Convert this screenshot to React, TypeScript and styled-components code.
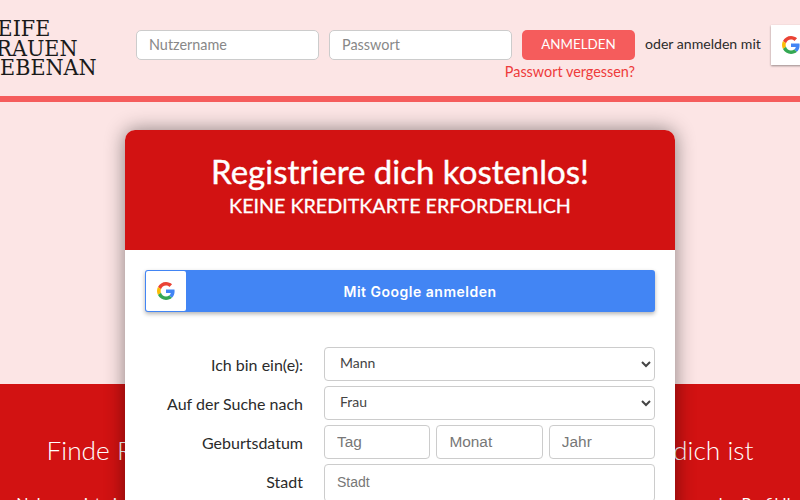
import styled, {createGlobalStyle} from 'styled-components';

const GlobalStyle = createGlobalStyle`
  html,
  body {
    margin: 0;
    padding: 0;
    background: #fce5e5;
    font-family: Lato, 'Open Sans', sans-serif;
    color: #2b2b2b;
  }
`;

const Page = styled.div`
  width: 800px;
  height: 500px;
  overflow: hidden;
`;

const Header = styled.header`
  display: flex;
  justify-content: center;
  align-items: flex-start;
  gap: 10px;
  height: 96px;
  width: 800px;
  border-bottom: 6px solid #f55c5c;
`;

const Logo = styled.div`
  flex: none;
  width: 144px;
  margin-top: 19px;
  font-family: 'DejaVu Serif Condensed', 'DejaVu Serif', serif;
  font-stretch: condensed;
  font-size: 23px;
  line-height: 19.5px;
  color: #1a1a1a;
`;

const LoginForm = styled.form`
  flex: none;
  display: flex;
  flex-direction: column;
  align-items: flex-end;
  margin-top: 30px;
`;

const LoginRow = styled.div`
  display: flex;
  gap: 10px;
`;

const LoginInput = styled.input`
  width: 183px;
  height: 30px;
  box-sizing: border-box;
  padding: 0 12px 2px;
  border: 1px solid #ccc;
  border-radius: 5px;
  background: #fff;
  font: 14.4px Lato, sans-serif;
  &::placeholder {
    color: #888;
  }
`;

const LoginButton = styled.button`
  width: 113px;
  height: 30px;
  padding: 0 0 2px;
  border: 0;
  border-radius: 5px;
  background: #f55c5c;
  color: #fff;
  font: 13.4px Lato, sans-serif;
`;

const ForgotLink = styled.a`
  margin-top: 3px;
  font-size: 14.4px;
  line-height: 18px;
  color: #ee3b3b;
`;

const OrText = styled.span`
  flex: none;
  width: 116px;
  margin-top: 35px;
  font-size: 14.1px;
  line-height: 18px;
  white-space: nowrap;
`;

const GoogleSquare = styled.div`
  flex: none;
  display: flex;
  align-items: center;
  justify-content: center;
  width: 40px;
  height: 40px;
  margin: 25px 7px 0 0;
  background: #fff;
  box-shadow: 0 1px 2px rgba(0, 0, 0, 0.4);
`;

const Hero = styled.section`
  height: 282px;
  padding-top: 28px;
  box-sizing: border-box;
`;

const Card = styled.div`
  position: relative;
  z-index: 1;
  width: 550px;
  margin: 0 auto;
  border-radius: 10px 10px 0 0;
  background: #fff;
  box-shadow: 0 0 20px rgba(0, 0, 0, 0.45);
`;

const CardHead = styled.div`
  height: 120px;
  padding-top: 21px;
  box-sizing: border-box;
  border-radius: 10px 10px 0 0;
  background: #d21212;
  color: #fff;
  text-align: center;
`;

const CardTitle = styled.h1`
  margin: 0;
  font-size: 33px;
  line-height: 40px;
  font-weight: 400;
  -webkit-text-stroke: 0.4px #fff;
`;

const CardSub = styled.p`
  margin: 2px 0 0;
  font-size: 19.7px;
  line-height: 26px;
  font-weight: 400;
  -webkit-text-stroke: 0.3px #fff;
`;

const CardBody = styled.div`
  padding: 20px;
`;

const GoogleWide = styled.button`
  display: flex;
  align-items: center;
  width: 510px;
  height: 42px;
  padding: 1px;
  border: 0;
  border-radius: 3px;
  background: #4285f4;
  box-shadow: 0 2px 4px rgba(0, 0, 0, 0.3);
`;

const GoogleIconBox = styled.span`
  display: flex;
  align-items: center;
  justify-content: center;
  width: 40px;
  height: 40px;
  border-radius: 2px;
  background: #fff;
`;

const GoogleLabel = styled.span`
  flex: 1;
  text-align: center;
  color: #fff;
  font: 600 14px Inter, sans-serif;
  letter-spacing: 0.5px;
`;

const Fields = styled.div`
  display: flex;
  flex-direction: column;
  gap: 5px;
  margin-top: 35px;
`;

const FieldRow = styled.div`
  display: grid;
  grid-template-columns: 158px 331px;
  column-gap: 21px;
  align-items: start;
`;

const FieldLabel = styled.label`
  padding-top: 8px;
  line-height: 20px;
  text-align: right;
  font-size: 16px;
`;

const Select = styled.select`
  width: 100%;
  height: 34px;
  padding: 0 11px 3px;
  border: 1px solid #ccc;
  border-radius: 4px;
  background: #fff;
  color: #444;
  font: 14px Lato, sans-serif;
`;

const DateGrid = styled.div`
  display: grid;
  grid-template-columns: repeat(3, 1fr);
  column-gap: 6.3px;
`;

const TextInput = styled.input<{$small?: boolean}>`
  width: 100%;
  height: ${p => (p.$small ? 38 : 34)}px;
  box-sizing: border-box;
  padding: 0 12px ${p => (p.$small ? 2 : 0)}px;
  border: 1px solid #ccc;
  border-radius: 4px;
  background: #fff;
  font: ${p => (p.$small ? 14 : 15.4)}px 'Liberation Sans', sans-serif;
  &::placeholder {
    color: #777;
  }
`;

const RedBand = styled.section`
  display: flex;
  flex-direction: column;
  align-items: center;
  height: 300px;
  background: #d21212;
  color: #fff;
  padding-top: 50px;
  box-sizing: border-box;
`;

const BandTitle = styled.h2`
  flex: none;
  margin: 0;
  font-size: 26.3px;
  line-height: 32px;
  font-weight: 300;
  white-space: nowrap;
`;

const BandText = styled.p`
  flex: none;
  margin: 27px 0 0;
  font-size: 16px;
  line-height: 20px;
  white-space: nowrap;
`;

function GoogleIcon({size}: {size: number}) {
  return (
    <svg width={size} height={size} viewBox="0 0 48 48">
      <path fill="#EA4335" d="M24 9.5c3.5 0 6.7 1.2 9.2 3.6l6.9-6.9C35.9 2.4 30.5 0 24 0 14.6 0 6.5 5.4 2.6 13.2l8 6.2C12.5 13.7 17.8 9.5 24 9.5z" />
      <path fill="#4285F4" d="M46.9 24.5c0-1.6-.1-3.1-.4-4.5H24v9h12.9c-.6 3-2.2 5.5-4.7 7.2l7.7 6c4.5-4.2 7-10.3 7-17.7z" />
      <path fill="#FBBC05" d="M10.5 28.6c-.5-1.4-.8-3-.8-4.6s.3-3.2.8-4.6l-8-6.2C.9 16.5 0 20.1 0 24s.9 7.500 2.600 10.800l7.900-6.200z" />
      <path fill="#34A853" d="M24 48c6.500 0 11.900-2.100 15.900-5.800l-7.700-6c-2.100 1.400-4.900 2.300-8.200 2.300-6.200 0-11.500-4.200-13.400-9.900l-8 6.200C6.500 42.600 14.600 48 24 48z" />
    </svg>
  );
}

export default function App() {
  return (
    <Page>
      <GlobalStyle />
      <Header>
        <Logo>
          REIFE
          <br />
          FRAUEN
          <br />
          NEBENAN
        </Logo>
        <LoginForm>
          <LoginRow>
            <LoginInput placeholder="Nutzername" />
            <LoginInput placeholder="Passwort" />
            <LoginButton type="button">ANMELDEN</LoginButton>
          </LoginRow>
          <ForgotLink>Passwort vergessen?</ForgotLink>
        </LoginForm>
        <OrText>oder anmelden mit</OrText>
        <GoogleSquare>
          <GoogleIcon size={18} />
        </GoogleSquare>
      </Header>
      <Hero>
        <Card>
          <CardHead>
            <CardTitle>Registriere dich kostenlos!</CardTitle>
            <CardSub>KEINE KREDITKARTE ERFORDERLICH</CardSub>
          </CardHead>
          <CardBody>
            <GoogleWide type="button">
              <GoogleIconBox>
                <GoogleIcon size={18} />
              </GoogleIconBox>
              <GoogleLabel>Mit Google anmelden</GoogleLabel>
            </GoogleWide>
            <Fields>
              <FieldRow>
                <FieldLabel>Ich bin ein(e):</FieldLabel>
                <Select defaultValue="Mann">
                  <option>Mann</option>
                  <option>Frau</option>
                </Select>
              </FieldRow>
              <FieldRow>
                <FieldLabel>Auf der Suche nach</FieldLabel>
                <Select defaultValue="Frau">
                  <option>Mann</option>
                  <option>Frau</option>
                </Select>
              </FieldRow>
              <FieldRow>
                <FieldLabel>Geburtsdatum</FieldLabel>
                <DateGrid>
                  <TextInput placeholder="Tag" />
                  <TextInput placeholder="Monat" />
                  <TextInput placeholder="Jahr" />
                </DateGrid>
              </FieldRow>
              <FieldRow>
                <FieldLabel>Stadt</FieldLabel>
                <TextInput $small placeholder="Stadt" />
              </FieldRow>
            </Fields>
          </CardBody>
        </Card>
      </Hero>
      <RedBand>
        <BandTitle>Finde Reife Frauen in deiner Nähe, die ganz perfekt für dich ist</BandTitle>
        <BandText>ReifeFrauenNebenan ist ein Portal für alle, die reife Frauen treffen wollen. Hier können Sie bei andern Personen das Profil Ihrer Wahl…</BandText>
      </RedBand>
    </Page>
  );
}
